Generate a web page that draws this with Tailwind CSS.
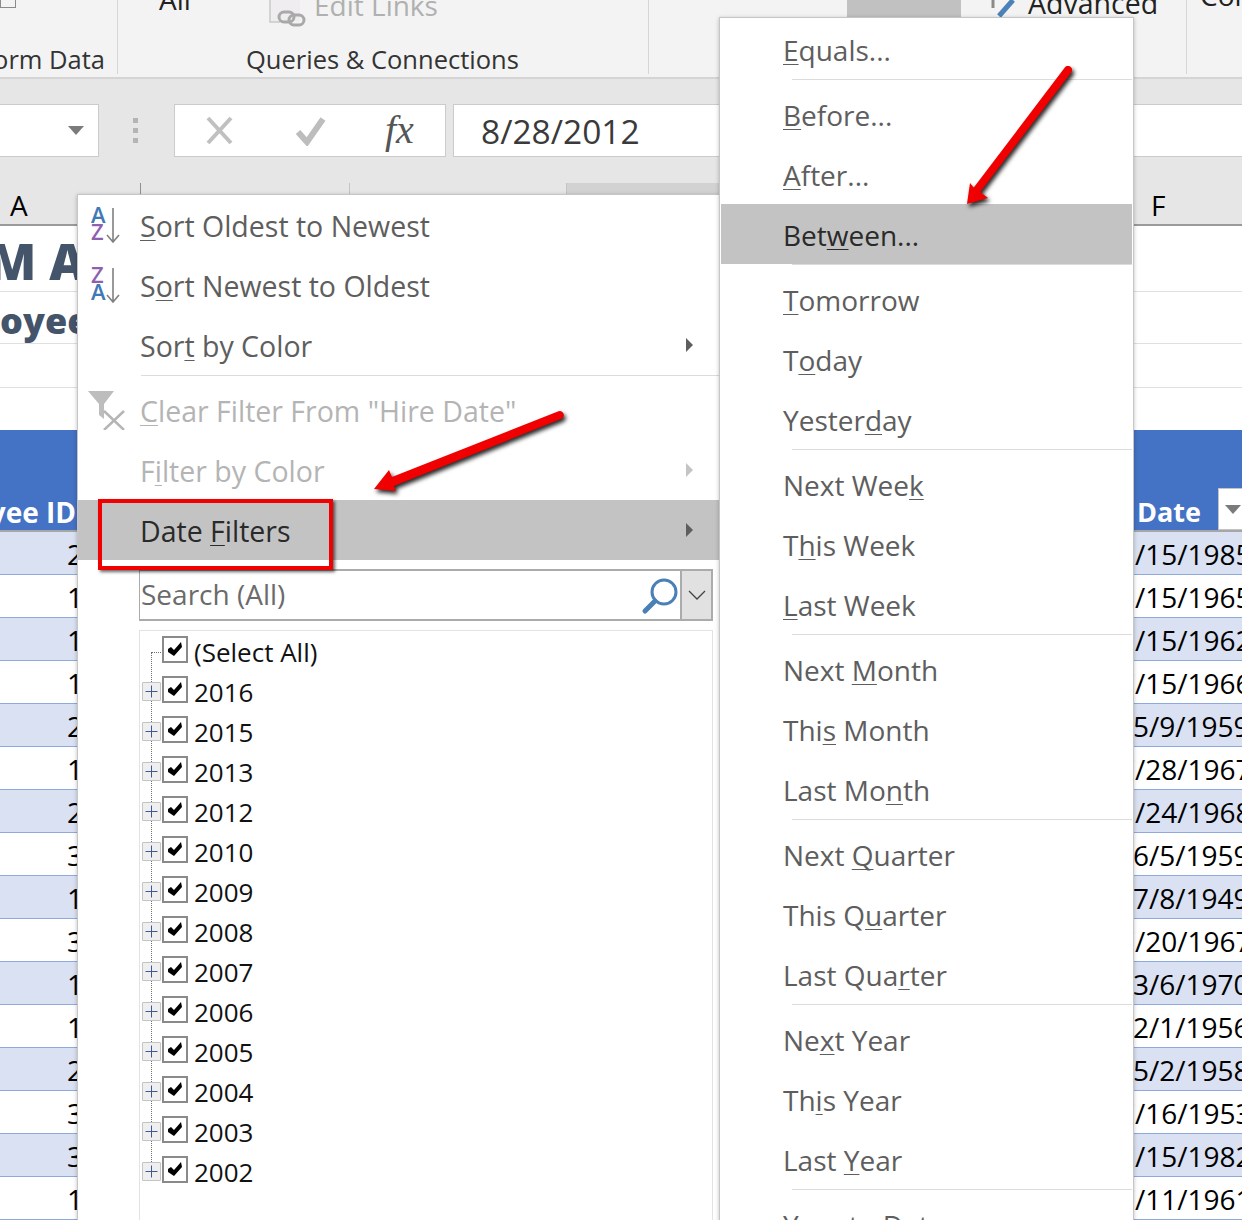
<!DOCTYPE html>
<html lang="en">
<head>
<meta charset="UTF-8">
<title>Date Filters</title>
<script src="https://cdn.jsdelivr.net/npm/@tailwindcss/browser@4"></script>
</head>
<body class="bg-white">
<div class="relative w-[1242px] h-[1220px] overflow-hidden bg-white font-['Open_Sans',sans-serif]">

  <!-- ribbon -->
  <div class="flex h-[79px] bg-[#f3f3f3] border-b-2 border-[#d4d4d4] text-[25.5px] text-[#333]">
    <div class="relative w-[118px] h-[74px] border-r border-[#d6d6d6] overflow-hidden">
      <div class="absolute left-0 top-0 w-[16px] h-[8px] border border-t-0 border-[#8a8a8a]"></div>
      <span class="absolute right-[12px] top-[40px] whitespace-nowrap leading-[38px]">Transform Data</span>
    </div>
    <div class="relative w-[531px] h-[74px] border-r border-[#d6d6d6] overflow-hidden">
      <span class="absolute left-[41px] top-[-20px] text-[28px] text-[#222] leading-[38px]">All</span>
      <svg class="absolute left-[150px] top-0" width="44" height="30" viewBox="0 0 44 30" fill="none">
        <path d="M2 0V22H12" stroke="#c9c9c9" stroke-width="1.5"/>
        <rect x="3" y="0" width="29" height="21" fill="#efedef"/>
        <rect x="11" y="12" width="15" height="10" rx="5" stroke="#a9a9a9" stroke-width="3"/>
        <rect x="21" y="15" width="15" height="10" rx="5" stroke="#a9a9a9" stroke-width="3"/>
      </svg>
      <span class="absolute left-[196px] top-[-14px] text-[28px] text-[#b0b0b0] leading-[38px]">Edit Links</span>
      <span class="absolute left-[128px] top-[40px] whitespace-nowrap leading-[38px]">Queries &amp; Connections</span>
    </div>
    <div class="relative w-[538px] h-[74px] border-r border-[#d6d6d6] overflow-hidden">
      <div class="absolute left-[198px] top-0 w-[114px] h-[18px] bg-[#c1c1c1]"></div>
      <svg class="absolute left-[342px] top-0" width="26" height="20" viewBox="0 0 26 20" fill="none">
        <path d="M2 0V8" stroke="#8a8a8a" stroke-width="3"/>
        <path d="M22 0L8 16" stroke="#4d82b8" stroke-width="5"/>
      </svg>
      <span class="absolute left-[379px] top-[-16px] text-[28.5px] text-[#222] leading-[38px]">Advanced</span>
    </div>
    <div class="relative flex-1 h-[74px] overflow-hidden">
      <span class="absolute left-[13px] top-[-24px] text-[28px] text-[#222] leading-[38px]">Consolidate</span>
    </div>
  </div>

  <!-- formula bar -->
  <div class="flex h-[104px] bg-[#e6e6e6] pt-[25px]">
    <div class="flex items-center justify-end w-[99px] h-[53px] bg-white border border-l-0 border-[#cbcbcb] pr-[14px]">
      <div class="w-0 h-0 border-x-[8px] border-x-transparent border-t-[9px] border-t-[#7b7b7b]"></div>
    </div>
    <div class="flex flex-col justify-center gap-[5px] w-[75px] h-[53px] items-center -ml-[1px]">
      <div class="w-[5px] h-[5px] bg-[#b4b4b4]"></div>
      <div class="w-[5px] h-[5px] bg-[#b4b4b4]"></div>
      <div class="w-[5px] h-[5px] bg-[#b4b4b4]"></div>
    </div>
    <div class="flex items-center w-[272px] h-[53px] ml-[1px] bg-white border border-[#cbcbcb]">
      <svg class="ml-[30px]" width="30" height="30" viewBox="0 0 30 30" fill="none">
        <path d="M3 2L26 27M26 2L3 27" stroke="#c0c0c0" stroke-width="4"/>
      </svg>
      <svg class="ml-[60px]" width="32" height="30" viewBox="0 0 32 30" fill="none">
        <path d="M3 16L12 26L28 3" stroke="#bdbdbd" stroke-width="6"/>
      </svg>
      <span class="ml-[58px] font-['Liberation_Serif',serif] italic text-[40px] leading-none text-[#555] -mt-[2px]">fx</span>
    </div>
    <div class="flex items-center flex-1 h-[53px] ml-[7px] bg-white border border-r-0 border-[#cbcbcb] pl-[27px] pt-[2px] text-[33.5px] text-[#3a3a3a]">8/28/2012</div>
  </div>

  <!-- column headers -->
  <div class="relative flex h-[43px] bg-[#e6e6e6] border-b-2 border-[#9a9a9a] text-[28px] text-black">
    <div class="w-[141px] border-r border-[#8f8f8f] pl-[10px] leading-[44px]">A</div>
    <div class="w-[209px] border-r border-[#c4c4c4]"></div>
    <div class="w-[217px] border-r border-[#c4c4c4]"></div>
    <div class="w-[500px] bg-[#d2d2d2]"></div>
    <span class="absolute left-[1151px] top-0 leading-[44px]">F</span>
  </div>

  <!-- sheet title rows -->
  <div class="h-[66px] border-b border-[#e0e0e0] overflow-hidden">
    <div class="w-[78px] overflow-hidden text-[50px] leading-[70px] font-extrabold text-[#44546a] whitespace-nowrap"><span class="block -ml-[12px]">M&nbsp;ATTENDANCE</span></div>
  </div>
  <div class="h-[52px] border-b border-[#e0e0e0] overflow-hidden">
    <div class="w-[78px] overflow-hidden text-[36px] leading-[58px] font-extrabold text-[#44546a] whitespace-nowrap">oyees</div>
  </div>
  <div class="h-[44px] border-b border-[#e0e0e0]"></div>
  <div class="h-[42px]"></div>

  <!-- table header -->
  <div class="relative flex justify-between h-[102px] bg-[#4472c4] border-b-2 border-[#a6a6a6] font-bold text-white leading-[36px]">
    <div class="w-[76px] h-full overflow-hidden flex justify-end items-end text-[28px] whitespace-nowrap">Employee ID</div>
    <div class="flex items-end w-[105px] h-full text-[27px] overflow-hidden">
      <span>Date</span>
      <div class="absolute left-[1218px] top-[58px] flex items-center justify-end w-[30px] h-[42px] bg-white border border-[#c4c4c4] pr-[6px]">
        <div class="w-0 h-0 border-x-[8px] border-x-transparent border-t-[9px] border-t-[#7b7b7b] -ml-[2px]"></div>
      </div>
    </div>
  </div>

  <!-- table rows -->
  <div id="rows"></div>

  <!-- filter menu -->
  <div class="absolute left-[77px] top-[194px] w-[660px] h-[1040px] bg-white border border-[#c6c6c6] shadow-[0_1px_4px_rgba(0,0,0,0.25)]">
    <div id="leftMenu"></div>

    <div class="flex items-stretch ml-[61px] mt-[9px] w-[574px] h-[52px] border-y-2 border-r-2 border-l border-[#ababab]">
      <div class="flex-1 flex items-center text-[28px] text-[#6b6b6b] leading-none pl-[1px] -mt-[3px]">Search (All)</div>
      <svg class="mt-[6px] -ml-[1px] mr-[1px]" width="38" height="38" viewBox="0 0 38 38" fill="none">
        <circle cx="23" cy="15" r="12" stroke="#4a80b6" stroke-width="3"/>
        <path d="M14 24L4 34" stroke="#4a80b6" stroke-width="5" stroke-linecap="round"/>
      </svg>
      <div class="flex items-center justify-center w-[31px] bg-[#e1e1e1] border-l-2 border-[#ababab]">
        <svg width="18" height="12" viewBox="0 0 18 12" fill="none"><path d="M1 2L9 10L17 2" stroke="#444" stroke-width="1.3"/></svg>
      </div>
    </div>

    <div class="relative ml-[61px] mt-[9px] w-[574px] h-[620px] border border-[#e3e3e3] pl-[22px]">
      <div class="absolute left-[11px] top-[21px] h-[520px] border-l border-dotted border-[#707070]"></div>
      <div class="absolute left-[11px] top-[21px] w-[10px] border-t border-dotted border-[#707070]"></div>
      <div id="tree" class="relative"></div>
    </div>
  </div>

  <!-- date filter submenu -->
  <div class="absolute left-[719px] top-[17px] w-[415px] h-[1240px] bg-white border border-[#c6c6c6] pt-[1px] px-[1px] shadow-[0_1px_4px_rgba(0,0,0,0.25)]">
    <div id="rightMenu"></div>
  </div>

  <!-- red callouts -->
  <div class="absolute left-[98px] top-[499px] w-[235px] h-[71px] border-4 border-[#f00000] shadow-[2px_2px_3px_rgba(0,0,0,0.6)]"></div>
  <svg class="absolute left-0 top-0 drop-shadow-[2px_3px_2px_rgba(0,0,0,0.85)]" width="1242" height="1220" viewBox="0 0 1242 1220">
    <path d="M558.5 411.3A4 4 0 0 1 561.5 418.7L394 486L396 491L374 489L389 470L392 477Z" fill="#f00000"/>
    <path d="M1064.8 67.6A4 4 0 0 1 1071.2 72.4L980.2 192L988 198L967 204L970 183L973.8 187.6Z" fill="#f00000"/>
  </svg>
</div>

<script>
  const normal = 'text-[#5e5e5e]';
  const hover = 'bg-[#c3c3c3] text-[#2a2a2a]';
  const off = 'text-[#b4b4b4]';
  const sepLeft = '<div class="h-[5px]"><div class="border-t border-[#dcdcdc] ml-[63px]"></div></div>';
  const sepRight = '<div class="h-[5px]"><div class="border-t border-[#dcdcdc] ml-[71px]"></div></div>';
  const key = (s) => `<u class="underline decoration-1 underline-offset-[3px] [text-decoration-skip-ink:none]">${s}</u>`;
  const caret = (c) => `<span class="w-0 h-0 border-y-[7px] border-y-transparent border-l-[7px] ${c} mr-[43px] -mt-[2px]"></span>`;

  const arrow = '<svg class="absolute left-[15px] top-[2px]" width="14" height="36" viewBox="0 0 14 36" fill="none"><path d="M7 0V33M1 27L7 34L13 27" stroke="#808080" stroke-width="1.6"/></svg>';
  const azIcon = `<div class="absolute left-[13px] top-[11px] w-[32px] h-[38px] font-semibold text-[22px] leading-[17px]">
      <div class="text-[#3f7ab5]">A</div><div class="text-[#8f5fb0]">Z</div>${arrow}</div>`;
  const zaIcon = `<div class="absolute left-[13px] top-[11px] w-[32px] h-[38px] font-semibold text-[22px] leading-[17px]">
      <div class="text-[#8f5fb0]">Z</div><div class="text-[#3f7ab5]">A</div>${arrow}</div>`;
  const clearIcon = `<svg class="absolute left-[9px] top-[10px]" width="40" height="40" viewBox="0 0 40 40" fill="none">
      <path d="M1 1H27L17 14V29L12 25V14Z" fill="#bdbdbd"/>
      <path d="M17 21L37 40M37 21L17 40" stroke="#b5b5b5" stroke-width="2.5"/></svg>`;

  const rowLeft = (label, cls, icon, end) =>
    `<div class="relative flex items-center justify-between h-[60px] pt-[2px] pl-[62px] text-[28.5px] whitespace-nowrap ${cls}">${icon || ''}<span>${label}</span>${end || ''}</div>`;

  document.getElementById('leftMenu').innerHTML =
    rowLeft(`${key('S')}ort Oldest to Newest`, normal, azIcon) +
    rowLeft(`S${key('o')}rt Newest to Oldest`, normal, zaIcon) +
    rowLeft(`Sor${key('t')} by Color`, normal, '', caret('border-l-[#5e5e5e]')) +
    sepLeft +
    rowLeft(`${key('C')}lear Filter From "Hire Date"`, off, clearIcon) +
    rowLeft(`F${key('i')}lter by Color`, off, '', caret('border-l-[#c4c4c4]')) +
    rowLeft(`Date ${key('F')}ilters`, hover, '', caret('border-l-[#5e5e5e]'));

  const groups = [
    [`${key('E')}quals...`],
    [`${key('B')}efore...`, `${key('A')}fter...`, `Bet${key('w')}een...`],
    [`${key('T')}omorrow`, `T${key('o')}day`, `Yester${key('d')}ay`],
    [`Next Wee${key('k')}`, `T${key('h')}is Week`, `${key('L')}ast Week`],
    [`Next ${key('M')}onth`, `Thi${key('s')} Month`, `Last Mo${key('n')}th`],
    [`Next ${key('Q')}uarter`, `This Q${key('u')}arter`, `Last Qua${key('r')}ter`],
    [`Ne${key('x')}t Year`, `Th${key('i')}s Year`, `Last ${key('Y')}ear`],
    [`Year to Date`]
  ];
  document.getElementById('rightMenu').innerHTML = groups.map(items =>
    items.map(label => {
      const cls = label.startsWith('Bet') ? hover : normal;
      return `<div class="flex items-center h-[60px] pt-[1px] pl-[62px] text-[28px] whitespace-nowrap ${cls}"><span>${label}</span></div>`;
    }).join('')
  ).join(sepRight);

  const years = ['(Select All)', '2016', '2015', '2013', '2012', '2010', '2009', '2008', '2007', '2006', '2005', '2004', '2003', '2002'];
  document.getElementById('tree').innerHTML = years.map((y, i) => `
    <div class="relative flex items-start h-[40px]">
      ${i ? `<div class="absolute left-[-20px] top-[11px] flex items-center justify-center w-[19px] h-[19px] bg-[#efefef] border border-[#c4c4c4] rounded-[1px]">
        <svg width="13" height="13" viewBox="0 0 13 13" fill="none"><path d="M6.5 0.5V12.5M0.5 6.5H12.5" stroke="#3d5a94"/></svg></div>` : ''}
      <div class="flex items-center justify-center w-[26px] h-[27px] mt-[5px] bg-white border-2 border-[#8a8a8a]">
        <svg width="15" height="15" viewBox="0 0 15 15"><path d="M0 7L3 5L6 8L13 0L14 5L6 14L0 10Z" fill="#000"/></svg>
      </div>
      <span class="ml-[6px] text-[26px] leading-[40px] mt-[1px] text-[#111]">${y}</span>
    </div>`).join('');

  const leftCol = ['2', '1', '1', '1', '2', '1', '2', '3', '1', '3', '1', '1', '2', '3', '3', '1'];
  const dates = ['3/15/1985', '3/15/1965', '7/15/1962', '7/15/1966', '5/9/1959', '7/28/1967', '3/24/1968', '6/5/1959', '7/8/1949', '7/20/1967', '3/6/1970', '2/1/1956', '5/2/1958', '7/16/1953', '7/15/1982', '7/11/1961'];
  document.getElementById('rows').innerHTML = leftCol.map((n, i) => `
    <div class="flex justify-between h-[43px] border-b border-[#8ea9db] text-[28px] leading-[44px] text-black ${i % 2 ? 'bg-white' : 'bg-[#d9e1f2]'}">
      <div class="w-[78px] overflow-hidden pl-[67px]">${n}</div>
      <div class="w-[109px] overflow-hidden whitespace-nowrap pl-[2px]"><span class="block ${dates[i].length === 9 ? '-ml-[16px]' : '-ml-[2px]'}">${dates[i]}</span></div>
    </div>`).join('');
</script>
</body>
</html>
